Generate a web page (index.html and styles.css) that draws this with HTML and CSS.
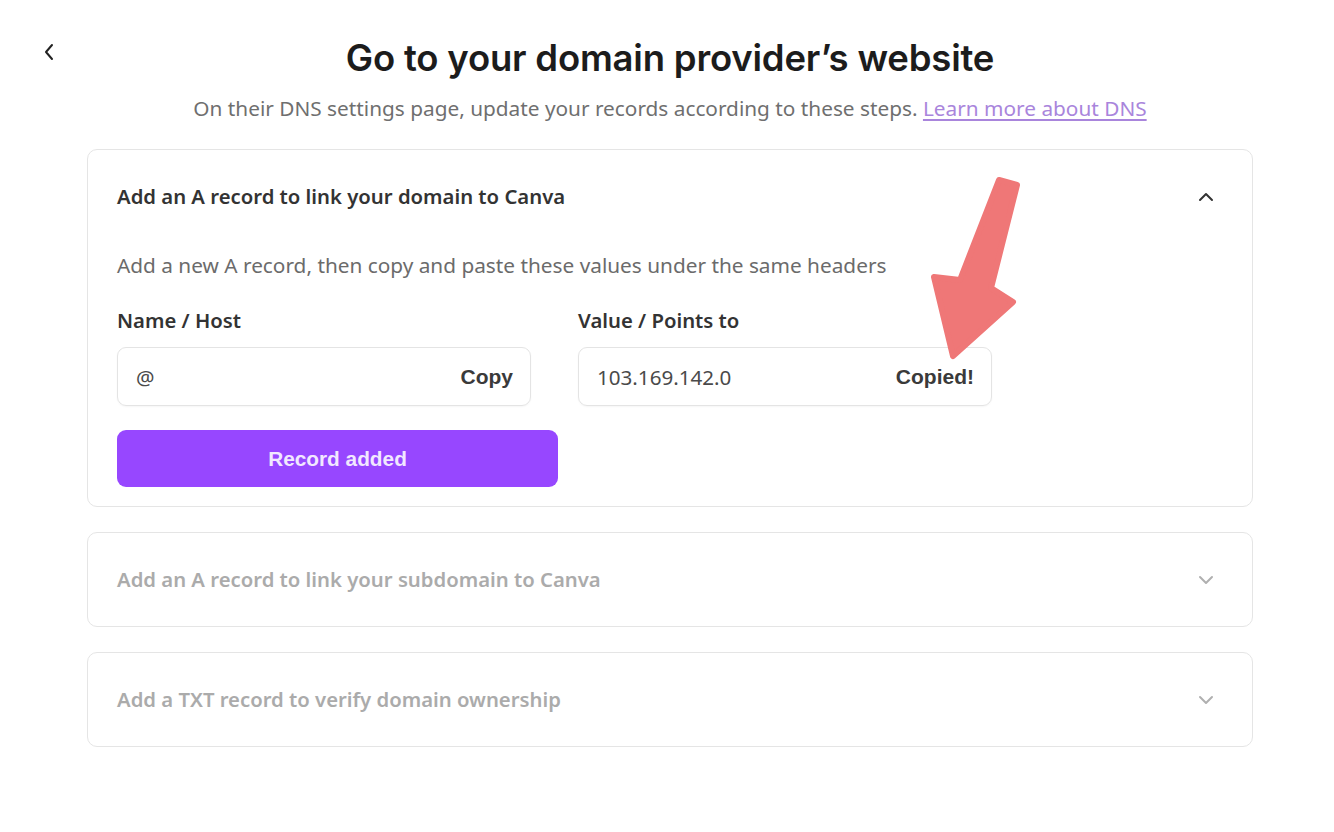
FILE: index.html
```html
<!DOCTYPE html>
<html lang="en">
<head>
<meta charset="utf-8">
<title>Go to your domain provider's website</title>
<link rel="stylesheet" href="styles.css">
</head>
<body>
<div class="page">
  <button class="back" aria-label="Back">
    <svg width="12" height="18" viewBox="0 0 12 18"><path d="M9 2 L3 9 L9 16" fill="none" stroke="#222" stroke-width="2" stroke-linecap="round" stroke-linejoin="round"/></svg>
  </button>
  <main class="wrap">
    <h1 class="title">Go to your domain provider’s website</h1>
    <p class="subtitle">On their DNS settings page, update your records according to these steps. <a href="#" class="link">Learn more about DNS</a></p>

    <section class="card">
      <div class="card-head">
        <span class="card-title">Add an A record to link your domain to Canva</span>
        <svg class="chev" width="16" height="10" viewBox="0 0 16 10"><path d="M2 8 L8 2 L14 8" fill="none" stroke="#333" stroke-width="2" stroke-linecap="round" stroke-linejoin="round"/></svg>
      </div>
      <div class="card-body">
        <p class="desc">Add a new A record, then copy and paste these values under the same headers</p>
        <div class="fields">
          <div class="field">
            <div class="label">Name / Host</div>
            <div class="input"><span class="val">@</span><span class="copy">Copy</span></div>
          </div>
          <div class="field">
            <div class="label">Value / Points to</div>
            <div class="input"><span class="val">103.169.142.0</span><span class="copy">Copied!</span></div>
          </div>
        </div>
        <button class="primary">Record added</button>
      </div>
    </section>

    <section class="card">
      <div class="card-head">
        <span class="card-title muted">Add an A record to link your subdomain to Canva</span>
        <svg class="chev" width="16" height="10" viewBox="0 0 16 10"><path d="M2 2 L8 8 L14 2" fill="none" stroke="#b0b0b0" stroke-width="2" stroke-linecap="round" stroke-linejoin="round"/></svg>
      </div>
    </section>

    <section class="card">
      <div class="card-head">
        <span class="card-title muted">Add a TXT record to verify domain ownership</span>
        <svg class="chev" width="16" height="10" viewBox="0 0 16 10"><path d="M2 2 L8 8 L14 2" fill="none" stroke="#b0b0b0" stroke-width="2" stroke-linecap="round" stroke-linejoin="round"/></svg>
      </div>
    </section>
  </main>

  <svg class="arrow" width="1334" height="832" viewBox="0 0 1334 832">
    <path d="M999 180 L1017 185 L991 288 L1013 302 L953 356 L934 277 L960 280 Z" fill="#ef7777" stroke="#ef7777" stroke-width="6" stroke-linejoin="round"/>
  </svg>
</div>
</body>
</html>
```

FILE: styles.css
```css
* { box-sizing: border-box; }
html, body { margin: 0; padding: 0; background: #ffffff; }
body {
  font-family: "Noto Sans", "Open Sans", sans-serif;
  color: #333;
  width: 1334px;
  height: 832px;
  overflow: hidden;
}
.page { position: relative; width: 1334px; height: 832px; }

.back {
  position: absolute;
  left: 41px;
  top: 42px;
  background: none;
  border: 0;
  padding: 0;
  width: 16px;
  height: 20px;
  display: flex;
  align-items: center;
  justify-content: center;
}

.wrap {
  margin-left: 87px;
  width: 1166px;
  padding-top: 37px;
  display: flex;
  flex-direction: column;
}

.title {
  margin: 0;
  text-align: center;
  font-family: "Inter", "Noto Sans", sans-serif;
  font-weight: 600;
  font-size: 36.5px;
  line-height: 42px;
  letter-spacing: -0.2px;
  color: #1c1c1c;
}
.subtitle {
  margin: 16px 0 0;
  text-align: center;
  font-size: 20.8px;
  line-height: 26px;
  color: #6f6f6f;
}
.link {
  color: #a985dc;
  text-decoration: underline;
  text-underline-offset: 3px;
}

.card {
  border: 1px solid #e5e5e5;
  border-radius: 10px;
  background: #fff;
}
.card + .card { margin-top: 25px; }
.wrap > .subtitle + .card { margin-top: 28px; }

.card-head {
  display: flex;
  align-items: center;
  justify-content: space-between;
  padding: 30px 38px 30px 29px;
  height: 93px;
}
.card-title {
  font-size: 20.3px;
  font-weight: 600;
  line-height: 33px;
  color: #333;
}
.card-title.muted { color: #ababab; }

.card-body {
  padding: 9px 30px 19px 29px;
}
.desc {
  margin: 0;
  font-size: 20.8px;
  line-height: 26px;
  color: #6b6b6b;
}
.fields {
  display: grid;
  grid-template-columns: 414px 414px;
  column-gap: 47px;
  margin-top: 29px;
}
.label {
  font-size: 20.3px;
  font-weight: 600;
  line-height: 26px;
  color: #333;
}
.input {
  margin-top: 14px;
  height: 59px;
  border: 1px solid #e4e4e4;
  border-radius: 9px;
  box-shadow: 0 1px 2px rgba(0,0,0,0.04);
  display: flex;
  align-items: center;
  justify-content: space-between;
  padding: 0 17px 0 18px;
}
.val { font-size: 20.6px; color: #4a4a4a; }
.copy {
  font-family: "Liberation Sans", "Noto Sans", sans-serif;
  font-weight: 700;
  font-size: 21px;
  color: #3a3a3a;
}
.primary {
  margin-top: 24px;
  width: 441px;
  height: 57px;
  border: 0;
  border-radius: 9px;
  background: #9747ff;
  color: #f1e8ff;
  font-family: "Liberation Sans", "Noto Sans", sans-serif;
  font-weight: 700;
  font-size: 20.8px;
  display: flex;
  align-items: center;
  justify-content: center;
}

.arrow {
  position: absolute;
  left: 0;
  top: 0;
  pointer-events: none;
}
```
